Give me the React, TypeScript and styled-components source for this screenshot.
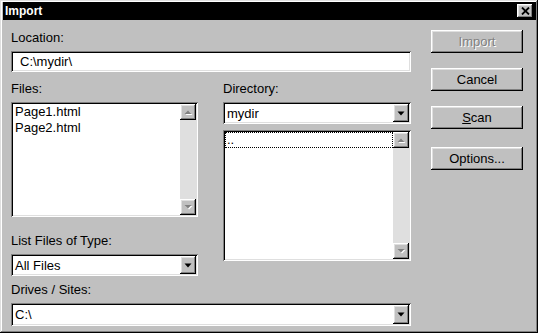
import React from "react";
import styled, { createGlobalStyle } from "styled-components";

const Global = createGlobalStyle`
  html, body { margin: 0; padding: 0; background: #c0c0c0; }
  body { font-family: "Liberation Sans", Arial, sans-serif; font-size: 13px; color: #000; }
  * { box-sizing: border-box; }
`;

const raised = `box-shadow: inset -1px -1px #000, inset 1px 1px #fff, inset -2px -2px #808080, inset 2px 2px #dfdfdf;`;
const sunken = `box-shadow: inset 1px 1px #808080, inset -1px -1px #fff, inset 2px 2px #000, inset -2px -2px #dfdfdf;`;

const Window = styled.div`
  width: 538px;
  height: 333px;
  padding: 2px 2px 2px 3px;
  background: #c0c0c0;
  box-shadow: inset -1px -1px #000, inset 1px 1px #dfdfdf, inset -2px -2px #808080, inset 2px 2px #fff;
  display: flex;
  flex-direction: column;
`;

const TitleBar = styled.div`
  height: 18px;
  background: #000;
  color: #fff;
  display: flex;
  align-items: center;
  justify-content: space-between;
  padding: 0 3px 0 2px;
  font-weight: bold;
  font-size: 12px;
`;

const CloseButton = styled.div`
  width: 16px;
  height: 14px;
  background: #c0c0c0;
  ${raised}
  display: flex;
  align-items: center;
  justify-content: center;
`;

const Body = styled.div`
  flex: 1;
  display: flex;
  gap: 20px;
  padding: 10px 0 0 8px;
`;

const Main = styled.div`
  width: 400px;
  display: flex;
  flex-direction: column;
`;

const Field = styled.div<{ $top?: number }>`
  display: flex;
  flex-direction: column;
  margin-top: ${(p) => p.$top ?? 0}px;
`;

const Label = styled.div`
  line-height: 16px;
  height: 16px;
  margin-bottom: 5px;
  white-space: nowrap;
`;

const TextBox = styled.div`
  height: 21px;
  background: #fff;
  ${sunken}
  padding: 0 9px;
  display: flex;
  align-items: center;
`;

const Columns = styled.div`
  display: grid;
  grid-template-columns: 187px 188px;
  column-gap: 25px;
  margin-top: 9px;
`;

const Column = styled.div`
  display: flex;
  flex-direction: column;
`;

const ListBox = styled.div<{ $h: number; $top?: number }>`
  height: ${(p) => p.$h}px;
  margin-top: ${(p) => p.$top ?? 0}px;
  background: #fff;
  ${sunken}
  padding: 2px;
  display: flex;
`;

const Items = styled.div`
  flex: 1;
  display: flex;
  flex-direction: column;
`;

const Item = styled.div<{ $focus?: boolean }>`
  height: 16px;
  line-height: 16px;
  padding-left: 2px;
  white-space: nowrap;
  ${(p) => (p.$focus ? "outline: 1px dotted #000; outline-offset: -1px;" : "")}
`;

const Scrollbar = styled.div`
  width: 16px;
  background: #dfdfdf;
  display: flex;
  flex-direction: column;
  justify-content: space-between;
`;

const ScrollButton = styled.div`
  width: 16px;
  height: 16px;
  background: #c0c0c0;
  ${raised}
  display: flex;
  align-items: center;
  justify-content: center;
`;

const Combo = styled.div<{ $h: number }>`
  height: ${(p) => p.$h}px;
  background: #fff;
  ${sunken}
  padding: 2px;
  display: flex;
  align-items: stretch;
`;

const ComboText = styled.div`
  flex: 1;
  display: flex;
  align-items: center;
  padding-left: 2px;
  white-space: nowrap;
`;

const DropButton = styled.div`
  width: 16px;
  background: #c0c0c0;
  ${raised}
  display: flex;
  align-items: center;
  justify-content: center;
`;

const ButtonColumn = styled.div`
  width: 92px;
  display: flex;
  flex-direction: column;
  gap: 15px;
`;

const Button = styled.div<{ $disabled?: boolean; $top?: number }>`
  height: 23px;
  margin-top: ${(p) => p.$top ?? 0}px;
  background: #c0c0c0;
  ${raised}
  display: flex;
  align-items: center;
  justify-content: center;
  color: ${(p) => (p.$disabled ? "#808080" : "#000")};
  text-shadow: ${(p) => (p.$disabled ? "1px 1px 0 #fff" : "none")};
`;

const Arrow = ({ dir, disabled }: { dir: "up" | "down"; disabled?: boolean }) => {
  const pts = dir === "up" ? "4.5,10 11.5,10 8,6.5" : "4.5,6 11.5,6 8,9.5";
  const w = 16;
  return (
    <svg width={w} height={16} viewBox="0 0 16 16">
      {disabled && <polygon points={pts} fill="#fff" transform="translate(1,1)" />}
      <polygon points={pts} fill={disabled ? "#808080" : "#000"} />
    </svg>
  );
};

const DropArrow = () => (
  <svg width={8} height={5} viewBox="0 0 8 5">
    <polygon points="0.5,0.5 7.5,0.5 4,4.5" fill="#000" />
  </svg>
);

const CloseIcon = () => (
  <svg width={9} height={8} viewBox="0 0 9 8">
    <path d="M1 0.5 L8 7.5 M8 0.5 L1 7.5" stroke="#000" strokeWidth={1.8} />
  </svg>
);

const ScrollBar = () => (
  <Scrollbar>
    <ScrollButton>
      <Arrow dir="up" disabled />
    </ScrollButton>
    <ScrollButton>
      <Arrow dir="down" disabled />
    </ScrollButton>
  </Scrollbar>
);

const ComboBox = ({ value, h }: { value: string; h: number }) => (
  <Combo $h={h}>
    <ComboText>{value}</ComboText>
    <DropButton>
      <DropArrow />
    </DropButton>
  </Combo>
);

export default function App() {
  return (
    <>
      <Global />
      <Window>
        <TitleBar>
          <span>Import</span>
          <CloseButton>
            <CloseIcon />
          </CloseButton>
        </TitleBar>
        <Body>
          <Main>
            <Field>
              <Label>Location:</Label>
              <TextBox>C:\mydir\</TextBox>
            </Field>
            <Columns>
              <Column>
                <Field>
                  <Label>Files:</Label>
                  <ListBox $h={115}>
                    <Items>
                      <Item>Page1.html</Item>
                      <Item>Page2.html</Item>
                    </Items>
                    <ScrollBar />
                  </ListBox>
                </Field>
                <Field $top={16}>
                  <Label>List Files of Type:</Label>
                  <ComboBox value="All Files" h={22} />
                </Field>
              </Column>
              <Column>
                <Field>
                  <Label>Directory:</Label>
                  <ComboBox value="mydir" h={22} />
                  <ListBox $h={131} $top={6}>
                    <Items>
                      <Item $focus>..</Item>
                    </Items>
                    <ScrollBar />
                  </ListBox>
                </Field>
              </Column>
            </Columns>
            <Field $top={6}>
              <Label>Drives / Sites:</Label>
              <ComboBox value="C:\" h={23} />
            </Field>
          </Main>
          <ButtonColumn>
            <Button $disabled>Import</Button>
            <Button>Cancel</Button>
            <Button>
              <span>
                <u>S</u>can
              </span>
            </Button>
            <Button $top={3}>Options...</Button>
          </ButtonColumn>
        </Body>
      </Window>
    </>
  );
}
